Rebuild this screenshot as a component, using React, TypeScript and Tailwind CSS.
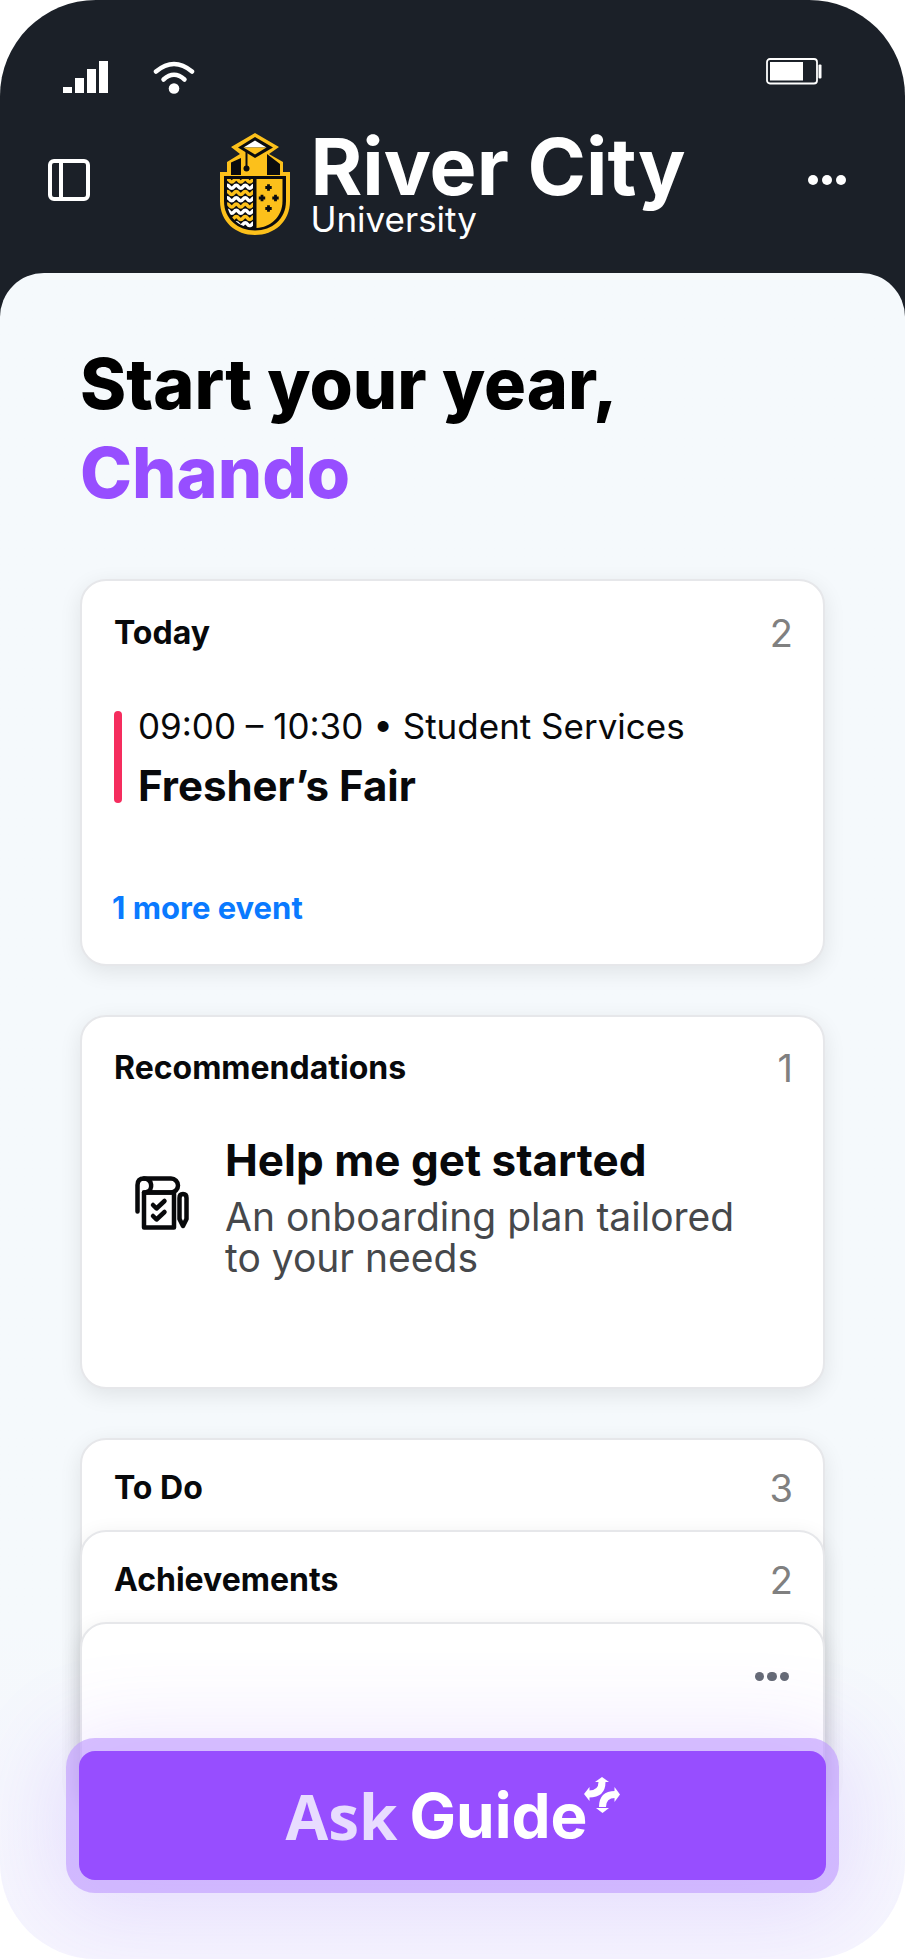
import React from 'react';

const wavePath = (y: number) =>
  `M5 ${y} q2.250 -3 4.500 0 t4.500 0 t4.500 0 t4.500 0 t4.500 0 t4.500 0 t4.500 0`;

const Crest = () => (
  <svg viewBox="0 0 70 102" className="h-[102px] w-[70px] shrink-0">
    <path
      d="M35 0 L59 14 L49 21 L63 29 V39 H70 V68 C70 89 54 102 35 102 C16 102 0 89 0 68 V39 H7 V29 L20 21 L11 14 Z"
      fill="#fcc01b"
    />
    <path d="M11 29.500 L21 25 V42 H11 Z M47 21 L60 31 V42 H47 Z" fill="#0b0c0f" />
    <path d="M35 4 L53 14.500 L35 25 L18 14.500 Z" fill="#0b0c0f" />
    <path d="M35 7.500 L46.500 14.500 H23.500 Z" fill="#fff" />
    <path d="M23.500 14.500 H46.500 L35 21.500 Z" fill="#fcc01b" />
    <path d="M26.500 18 V34" stroke="#0b0c0f" strokeWidth="2" />
    <circle cx="26.500" cy="35.500" r="3" fill="#0b0c0f" />
    <path
      d="M4 43 H66 V68 C66 86 52 97.500 35 97.500 C18 97.500 4 86 4 68 Z"
      fill="#0b0c0f"
    />
    <path d="M36.500 46 H62.500 V68 C62.500 84 50 94.500 36.500 95 Z" fill="#fcc01b" />
    <clipPath id="shield-left">
      <path d="M7 46 H33 V95 C19 94.500 7 84 7 68 Z" />
    </clipPath>
    <g clipPath="url(#shield-left)" fill="none" strokeWidth="3.600">
      {[47.5, 60, 72.5, 85].map((y) => (
        <g key={y}>
          <path d={wavePath(y)} stroke="#fcc01b" />
          <path d={wavePath(y + 6.25)} stroke="#fff" />
        </g>
      ))}
    </g>
    <g fill="#0b0c0f">
      {[
        [48.5, 54.5],
        [42, 65],
        [55.5, 65],
        [48.5, 75.5],
      ].map(([x, y]) => (
        <path
          key={`${x}-${y}`}
          d={`M${x - 1.4} ${y - 3.2}h2.800v1.800h1.800v2.800h-1.800v1.800h-2.800v-1.800h-1.800v-2.800h1.800z`}
        />
      ))}
    </g>
  </svg>
);

const SignalIcon = () => (
  <svg viewBox="0 0 45 32" className="h-8 w-[45px]" fill="#fff">
    <rect x="0" y="26" width="9" height="6" />
    <rect x="12" y="17" width="9" height="15" />
    <rect x="24" y="8" width="9" height="24" />
    <rect x="36" y="0" width="9" height="32" />
  </svg>
);

const WifiIcon = () => (
  <svg viewBox="0 0 42 33" className="h-[33px] w-[42px]" fill="none" stroke="#fff" strokeWidth="4.500" strokeLinecap="round">
    <path d="M3 10.500 Q21 -4.500 39 10.500" />
    <path d="M10.500 18.500 Q21 9 31.500 18.500" />
    <circle cx="21" cy="27.500" r="5.300" fill="#fff" stroke="none" />
  </svg>
);

const BatteryIcon = () => (
  <svg viewBox="0 0 56 27" className="h-[27px] w-14">
    <rect x="1" y="1" width="50" height="24.500" rx="3" fill="none" stroke="#fff" strokeWidth="1.800" />
    <rect x="4" y="4" width="33" height="18.500" fill="#fff" />
    <rect x="52.500" y="6.500" width="3" height="14" rx="1" fill="#fff" />
  </svg>
);

const PlanIcon = () => (
  <svg
    viewBox="0 0 54 54"
    className="h-[54px] w-[54px] shrink-0"
    fill="none"
    stroke="#08090b"
    strokeWidth="4.500"
    strokeLinecap="round"
    strokeLinejoin="round"
  >
    <path d="M2.500 35.500 V9 Q2.500 2.500 9 2.500 H36 A7 7 0 0 1 36 16.500 H9" />
    <path d="M9 2.500 C18 3 18 14 12 16" />
    <rect x="9" y="16.500" width="30" height="35" />
    <path d="M18 29 L21.500 32.500 L29.500 25 M18 40 L21.500 43.500 L29.500 36" />
    <path d="M44.500 22 Q44.500 18 48 18 Q51.500 18 51.500 22 V43 L48 50 L44.500 43 Z" />
  </svg>
);

const GuideMark = () => (
  <svg viewBox="0 0 36 36" className="h-9 w-9" fill="none" stroke="#fff" strokeWidth="7">
    <path d="M5 17 Q18 17 18 5" />
    <path d="M18.500 30 Q18.500 17.500 31 17.500" />
    <g fill="#fff" stroke="none">
      <path d="M18 0 L25 5 L11 5 Z" />
      <path d="M0 17 L5.500 10 V24 Z" />
      <path d="M36 17.500 L30.500 10 V25 Z" />
      <path d="M18.500 36 L12 31 H25 Z" />
    </g>
  </svg>
);

const Dots = ({ className }: { className: string }) => (
  <span className={`flex ${className}`}>
    <i className="flex-1 rounded-full bg-current" />
    <i className="flex-1 rounded-full bg-current" />
    <i className="flex-1 rounded-full bg-current" />
  </span>
);

const cardClass =
  'rounded-[26px] border-2 border-[#e6e7ea] bg-white shadow-[0_6px_22px_rgba(0,0,0,0.09)]';

const CardHeader = ({ title, count }: { title: string; count: number }) => (
  <div className="flex items-center justify-between pl-8 pr-[30px]">
    <h2 className="text-[32px] leading-10 font-bold">{title}</h2>
    <span className="text-[38px] leading-10 text-[#808080]">{count}</span>
  </div>
);

const App = () => {
  return (
    <div className="overflow-hidden rounded-[96px] font-['Inter','Liberation_Sans',sans-serif] text-[#08090b]">
      <header className="bg-[#1b2028] pt-[58px] pb-20 text-white">
        <div className="flex items-start justify-between pl-[63px] pr-[83px]">
          <div className="flex gap-[45px] pt-[3px]">
            <SignalIcon />
            <WifiIcon />
          </div>
          <BatteryIcon />
        </div>
        <div className="mt-[37px] flex items-center justify-between pl-12 pr-[59px]">
          <button type="button" aria-label="Toggle sidebar" className="mb-2 flex h-[42px] w-[42px] rounded-md border-4 border-white">
            <span className="w-[11px] border-r-4 border-white" />
          </button>
          <div className="ml-2 flex items-center gap-5">
            <Crest />
            <div className="flex flex-col">
              <span className="text-[79px] leading-[70px] font-bold">River City</span>
              <span className="text-[35px] leading-9">University</span>
            </div>
          </div>
          <button type="button" aria-label="More options" className="mb-2">
            <Dots className="h-[10px] w-[38px] gap-1" />
          </button>
        </div>
      </header>

      <main className="-mt-11 rounded-t-[44px] bg-linear-to-b from-[#f5f9fc] from-80% to-[#f6f5fe] px-20 pt-[66px] pb-[79px]">
        <h1 className="text-[70px] leading-[89px] font-extrabold text-black">
          Start your year,
          <br />
          <span className="text-[#974eff]">Chando</span>
        </h1>

        <section className={`mt-[62px] pt-8 pb-9 ${cardClass}`}>
          <CardHeader title="Today" count={2} />
          <div className="mt-[58px] ml-8 flex gap-4">
            <span className="w-2 rounded-full bg-[#f52d5e]" />
            <div>
              <p className="text-[35px] leading-[30px]">09:00 – 10:30 • Student Services</p>
              <p className="mt-7 text-[42px] leading-[34px] font-bold">Fresher’s Fair</p>
            </div>
          </div>
          <a href="#events" className="mt-[85px] ml-[30px] block text-[31px] leading-10 font-bold text-[#0a7aff]">
            1 more event
          </a>
        </section>

        <section className={`mt-[49px] pt-[31px] pb-[109px] ${cardClass}`}>
          <CardHeader title="Recommendations" count={1} />
          <div className="mt-[46px] flex items-start gap-9 pl-[53px]">
            <div className="mt-[42px]">
              <PlanIcon />
            </div>
            <div>
              <h3 className="text-[44px] leading-[52px] font-bold">Help me get started</h3>
              <p className="mt-[10px] text-[39px] leading-[41px] text-[#46484b]">
                An onboarding plan tailored
                <br />
                to your needs
              </p>
            </div>
          </div>
        </section>

        <section className={`mt-[49px] pt-7 ${cardClass}`}>
          <CardHeader title="To Do" count={3} />
          <section className={`-mx-[2px] mt-[22px] pt-7 ${cardClass}`}>
            <CardHeader title="Achievements" count={2} />
            <section className={`-mx-[2px] mt-[22px] flex h-[180px] justify-end pt-12 pr-[34px] ${cardClass}`}>
              <button type="button" aria-label="More cards" className="h-[9px] text-[#666b76]">
                <Dots className="h-[9px] w-[34px] gap-[3px]" />
              </button>
            </section>
          </section>
        </section>

        <button
          type="button"
          className="relative -mx-[1px] -mt-[55px] flex h-[129px] w-[calc(100%+2px)] items-center justify-center gap-3 rounded-2xl bg-[#974eff] text-white shadow-[0_0_0_13px_rgba(193,158,255,0.65),0_10px_90px_24px_rgba(140,78,255,0.15)]"
        >
          <span className="font-['Open_Sans'] text-[62px] leading-none font-bold text-[#e8dcff]">Ask</span>
          <span className="flex">
            <span className="text-[62px] leading-none font-bold">Guide</span>
            <span className="-mt-2 -ml-1">
              <GuideMark />
            </span>
          </span>
        </button>
      </main>
    </div>
  );
};

export default App;
